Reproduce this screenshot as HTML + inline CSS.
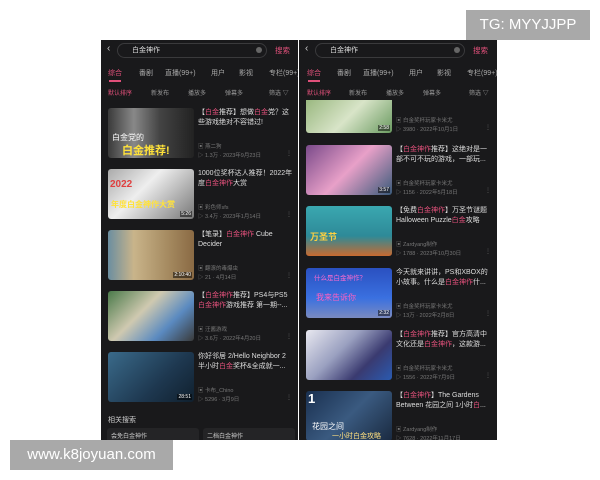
<!DOCTYPE html>
<html><head><meta charset="utf-8"><style>
*{margin:0;padding:0;box-sizing:border-box}
body{width:600px;height:480px;background:#fff;position:relative;overflow:hidden;font-family:"Liberation Sans","Noto Sans CJK SC",sans-serif}
.ph{position:absolute;top:40px;height:400px;background:#19191b;overflow:hidden}
.a{position:absolute;white-space:nowrap}
.sb{position:absolute;top:3px;left:16px;width:150px;height:15px;border:1px solid #3a3a3c;border-radius:8px;color:#ddd;font-size:7px;line-height:13px;padding-left:14px}
.tab{font-size:7px;color:#aaa;top:28px}
.srt{font-size:6px;color:#999;top:48px}
.pk{color:#e0507a}
.th{position:absolute;left:7px;width:86px;height:50px;border-radius:3px}
.t{position:absolute;left:97px;width:96px;font-size:7px;line-height:10px;color:#ddd}
.m{position:absolute;left:97px;font-size:5.5px;color:#777;white-space:nowrap}
.d{position:absolute;right:6px;font-size:6px;color:#666}
.dur{position:absolute;right:2px;bottom:2px;font-size:5px;color:#fff;background:rgba(0,0,0,.5);padding:0 1px}
.wm{position:absolute;background:#a9a9a9;color:#fff;font-size:15px;line-height:30px;text-align:center}
</style></head><body>

<div class="ph" style="left:101px;width:197px">
<div class="a" style="left:6px;top:3px;color:#ccc;font-size:10px">‹</div>
<div class="sb">白金神作<span style="position:absolute;right:4px;top:3px;width:6px;height:6px;border-radius:50%;background:#666"></span></div>
<div class="a pk" style="left:174px;top:5px;font-size:7.5px">搜索</div>
<div class="a tab pk" style="left:7px">综合</div>
<div class="a" style="left:8px;top:40px;width:12px;height:2px;background:#e0507a"></div>
<div class="a tab" style="left:38px">番剧</div><div class="a tab" style="left:64px">直播(99+)</div><div class="a tab" style="left:110px">用户</div><div class="a tab" style="left:138px">影视</div><div class="a tab" style="left:168px">专栏(99+)</div>
<div class="a srt pk" style="left:7px">默认排序</div><div class="a srt" style="left:50px">新发布</div><div class="a srt" style="left:87px">播放多</div><div class="a srt" style="left:124px">弹幕多</div><div class="a srt" style="left:168px">筛选 ▽</div>

<div class="th" style="top:68px;background:linear-gradient(90deg,#3a3a3a,#888 30%,#444 60%,#222)"><div class="a" style="left:4px;top:24px;font-size:8px;color:#fff">白金党的</div><div class="a" style="left:14px;top:34px;font-size:11px;color:#ffe23a;font-weight:bold">白金推荐!</div></div>
<div class="t" style="top:68px">【<span class="pk">白金</span>推荐】想做<span class="pk">白金</span>党？这些游戏绝对不容错过!</div>
<div class="m" style="top:102px">▣ 燕二狗</div><div class="m" style="top:111px">▷ 1.3万 · 2023年9月23日</div><div class="d" style="top:110px">⋮</div>

<div class="th" style="top:129px;background:linear-gradient(135deg,#aaa,#eee 40%,#777)"><div class="a" style="left:2px;top:10px;font-size:10px;color:#e04040;font-weight:bold">2022</div><div class="a" style="left:3px;top:30px;font-size:8px;color:#ffe23a;font-weight:bold">年度白金神作大赏</div><span class="dur">5:26</span></div>
<div class="t" style="top:129px">1000位奖杯达人推荐！2022年度<span class="pk">白金神作</span>大赏</div>
<div class="m" style="top:163px">▣ 彩色师sfs</div><div class="m" style="top:172px">▷ 3.4万 · 2023年1月14日</div><div class="d" style="top:171px">⋮</div>

<div class="th" style="top:190px;background:linear-gradient(90deg,#6b8ea0,#c9b48a 30%,#a58a60 70%,#8a6a44)"><span class="dur">2:10:40</span></div>
<div class="t" style="top:190px">【笔录】<span class="pk">白金神作</span> Cube Decider</div>
<div class="m" style="top:224px">▣ 翻滚的毒爆虫</div><div class="m" style="top:233px">▷ 21 · 4月14日</div><div class="d" style="top:232px">⋮</div>

<div class="th" style="top:251px;background:linear-gradient(135deg,#4a7a4a,#cfc9b0 40%,#5a8ac0 70%,#3a3a3a)"></div>
<div class="t" style="top:251px">【<span class="pk">白金神作</span>推荐】PS4与PS5<span class="pk">白金神作</span>游戏推荐 第一期--...</div>
<div class="m" style="top:285px">▣ 汪酱游戏</div><div class="m" style="top:294px">▷ 3.6万 · 2022年4月20日</div><div class="d" style="top:293px">⋮</div>

<div class="th" style="top:312px;background:linear-gradient(135deg,#3a6a8a,#1e3850 60%,#10202e)"><span class="dur">28:51</span></div>
<div class="t" style="top:312px">你好邻居 2/Hello Neighbor 2 半小时<span class="pk">白金</span>奖杯&amp;全成就一...</div>
<div class="m" style="top:346px">▣ 卡布_Chino</div><div class="m" style="top:355px">▷ 5296 · 3月9日</div><div class="d" style="top:354px">⋮</div>

<div class="a" style="left:7px;top:375px;font-size:7px;color:#ccc">相关搜索</div>
<div class="a" style="left:6px;top:388px;width:92px;height:16px;background:#242426;border-radius:3px;font-size:6px;color:#ccc;padding:3px 4px">会免白金神作</div>
<div class="a" style="left:102px;top:388px;width:92px;height:16px;background:#242426;border-radius:3px;font-size:6px;color:#ccc;padding:3px 4px">二档白金神作</div>
</div>

<div class="ph" style="left:299px;width:198px">
<div class="a" style="left:6px;top:3px;color:#ccc;font-size:10px">‹</div>
<div class="sb">白金神作<span style="position:absolute;right:4px;top:3px;width:6px;height:6px;border-radius:50%;background:#666"></span></div>
<div class="a pk" style="left:174px;top:5px;font-size:7.5px">搜索</div>
<div class="a tab pk" style="left:8px">综合</div>
<div class="a" style="left:9px;top:40px;width:12px;height:2px;background:#e0507a"></div>
<div class="a tab" style="left:38px">番剧</div><div class="a tab" style="left:64px">直播(99+)</div><div class="a tab" style="left:110px">用户</div><div class="a tab" style="left:138px">影视</div><div class="a tab" style="left:168px">专栏(99+)</div>
<div class="a srt pk" style="left:8px">默认排序</div><div class="a srt" style="left:50px">新发布</div><div class="a srt" style="left:87px">播放多</div><div class="a srt" style="left:124px">弹幕多</div><div class="a srt" style="left:170px">筛选 ▽</div>

<div class="th" style="top:60px;height:33px;border-radius:0 0 3px 3px;background:linear-gradient(135deg,#9ab880,#d8e4c8 50%,#6a9a60)"><span class="dur">2:58</span></div>
<div class="m" style="top:76px">▣ 白金奖杯玩家卡米尤</div><div class="m" style="top:85px">▷ 3980 · 2022年10月1日</div><div class="d" style="top:84px">⋮</div>

<div class="th" style="top:105px;background:linear-gradient(135deg,#7a4a8a,#e8a0c8 50%,#3a5a7a)"><span class="dur">3:57</span></div>
<div class="t" style="top:105px">【<span class="pk">白金神作</span>推荐】这绝对是一部不可不玩的游戏，一部玩...</div>
<div class="m" style="top:139px">▣ 白金奖杯玩家卡米尤</div><div class="m" style="top:148px">▷ 1156 · 2022年5月18日</div><div class="d" style="top:147px">⋮</div>

<div class="th" style="top:166px;background:linear-gradient(180deg,#3aa8b0,#2e8a98 60%,#c86a30)"><div class="a" style="left:4px;top:24px;font-size:9px;color:#ffd040;font-weight:bold">万圣节</div></div>
<div class="t" style="top:166px">【免费<span class="pk">白金神作</span>】万圣节谜题 Halloween Puzzle<span class="pk">白金</span>攻略</div>
<div class="m" style="top:200px">▣ Zardyang制作</div><div class="m" style="top:209px">▷ 1788 · 2023年10月30日</div><div class="d" style="top:208px">⋮</div>

<div class="th" style="top:228px;background:linear-gradient(180deg,#2a50c0,#3a70e0 60%,#7a8ac0)"><div class="a" style="left:8px;top:4px;font-size:6.5px;color:#ff6ad0">什么是白金神作？</div><div class="a" style="left:10px;top:24px;font-size:8px;color:#ff60c0">我来告诉你</div><span class="dur">2:32</span></div>
<div class="t" style="top:228px">今天就来讲讲，PS和XBOX的小故事。什么是<span class="pk">白金神作</span>什...</div>
<div class="m" style="top:262px">▣ 白金奖杯玩家卡米尤</div><div class="m" style="top:271px">▷ 13万 · 2022年2月8日</div><div class="d" style="top:270px">⋮</div>

<div class="th" style="top:290px;background:linear-gradient(135deg,#e8e8f0,#9aa0c0 40%,#3a3a70 70%,#2a5ab0)"></div>
<div class="t" style="top:290px">【<span class="pk">白金神作</span>推荐】官方高清中文化还是<span class="pk">白金神作</span>，这款游...</div>
<div class="m" style="top:324px">▣ 白金奖杯玩家卡米尤</div><div class="m" style="top:333px">▷ 1556 · 2022年7月9日</div><div class="d" style="top:332px">⋮</div>

<div class="th" style="top:351px;background:linear-gradient(135deg,#1a3050,#3a5a80 50%,#1a2a40)"><div class="a" style="left:2px;top:0px;font-size:13px;color:#fff;font-weight:bold">1</div><div class="a" style="left:6px;top:30px;font-size:8px;color:#fff">花园之间</div><div class="a" style="left:26px;top:40px;font-size:7px;color:#ffe080">一小时白金攻略</div></div>
<div class="t" style="top:351px">【<span class="pk">白金神作</span>】The Gardens Between 花园之间 1小时<span class="pk">白</span>...</div>
<div class="m" style="top:385px">▣ Zardyang制作</div><div class="m" style="top:394px">▷ 7628 · 2022年11月17日</div>
</div>

<div class="wm" style="left:466px;top:10px;width:124px;height:30px">TG: MYYJJPP</div>
<div class="wm" style="left:10px;top:440px;width:163px;height:30px">www.k8joyuan.com</div>
</body></html>
